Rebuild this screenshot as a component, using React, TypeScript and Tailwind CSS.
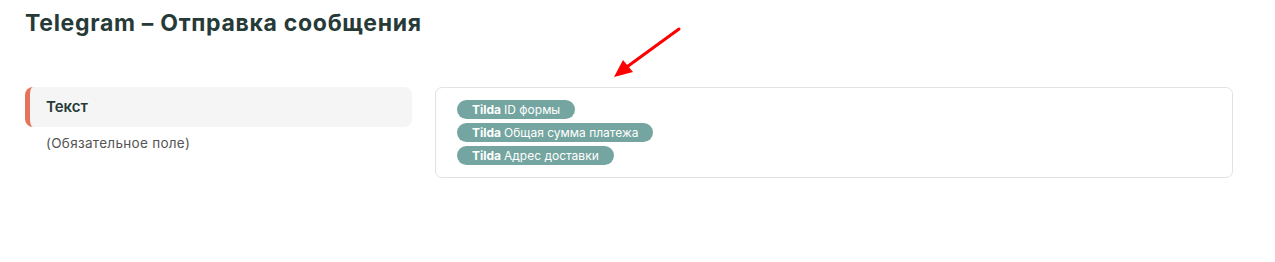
import React from "react";

const fields = ["ID формы", "Общая сумма платежа", "Адрес доставки"];

function Chip({ label }: { label: string }) {
  return (
    <span className="inline-flex w-fit items-center gap-[3px] rounded-full bg-[#74a5a0] px-[15px] h-[19px] text-[12px] leading-none text-white">
      <b className="font-bold">Tilda</b>
      <span>{label}</span>
    </span>
  );
}

export default function App() {
  return (
    <div
      className="relative min-h-[262px] bg-white px-[25px] pt-[8px]"
      style={{ fontFamily: "Inter, 'Noto Sans', sans-serif" }}
    >
      <h1 className="text-[23px] font-bold leading-[30px] tracking-[0.7px] text-[#263a37]">
        Telegram – Отправка сообщения
      </h1>

      <div className="mt-[49px] flex items-start gap-[23px]">
        {/* label column */}
        <div className="w-[387px] shrink-0">
          <div className="flex h-[40px] items-center rounded-[8px] border-l-[5px] border-[#e4755c] bg-[#f5f5f5] pl-[16px]">
            <span className="text-[15px] font-semibold text-[#263a37]">Текст</span>
          </div>
          <div className="mt-[6px] pl-[21px] text-[13.5px] tracking-[0.3px] text-[#555]">(Обязательное поле)</div>
        </div>

        {/* value box */}
        <div className="flex h-[91px] w-[798px] flex-col gap-[4px] rounded-[7px] border border-[#e2e2e2] px-[21px] pt-[12px]">
          {fields.map((f) => (
            <Chip key={f} label={f} />
          ))}
        </div>
      </div>

      {/* annotation arrow */}
      <svg
        className="pointer-events-none absolute left-0 top-0"
        width="1275"
        height="262"
      >
        <line x1="679" y1="29" x2="624" y2="69" stroke="#f00" strokeWidth="3" strokeLinecap="round" />
        <polygon points="614,77 623,60 633,72" fill="#f00" />
      </svg>
    </div>
  );
}
